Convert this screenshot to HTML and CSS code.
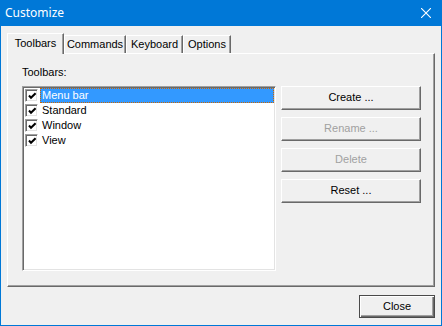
FILE: index.html
```html
<!DOCTYPE html>
<html>
<head>
<meta charset="utf-8">
<link rel="stylesheet" href="styles.css">
</head>
<body>
<div class="window">
  <div class="titlebar">
    <span class="title">Customize</span>
    <svg class="close-x" width="10" height="10" viewBox="0 0 10 10"><path d="M0 0L10 10M10 0L0 10" stroke="#fff" stroke-width="1.1" fill="none"/></svg>
  </div>
  <div class="body">
    <div class="tabs">
      <div class="tab selected tab-toolbars">Toolbars</div>
      <div class="tab tab-commands">Commands</div>
      <div class="tab tab-keyboard">Keyboard</div>
      <div class="tab tab-options">Options</div>
    </div>
    <div class="pane">
      <div class="label">Toolbars:</div>
      <div class="pane-row">
        <div class="listbox">
          <div class="item">
            <span class="cb"><svg width="9" height="9" viewBox="0 0 9 9"><path d="M1 3.5L3 5.8L7.6 1.2" stroke="#000" stroke-width="2" fill="none"/></svg></span>
            <span class="item-text selected">Menu bar</span>
          </div>
          <div class="item">
            <span class="cb"><svg width="9" height="9" viewBox="0 0 9 9"><path d="M1 3.5L3 5.8L7.6 1.2" stroke="#000" stroke-width="2" fill="none"/></svg></span>
            <span class="item-text">Standard</span>
          </div>
          <div class="item">
            <span class="cb"><svg width="9" height="9" viewBox="0 0 9 9"><path d="M1 3.5L3 5.8L7.6 1.2" stroke="#000" stroke-width="2" fill="none"/></svg></span>
            <span class="item-text">Window</span>
          </div>
          <div class="item">
            <span class="cb"><svg width="9" height="9" viewBox="0 0 9 9"><path d="M1 3.5L3 5.8L7.6 1.2" stroke="#000" stroke-width="2" fill="none"/></svg></span>
            <span class="item-text">View</span>
          </div>
        </div>
        <div class="buttons">
          <div class="btn">Create ...</div>
          <div class="btn disabled">Rename ...</div>
          <div class="btn disabled">Delete</div>
          <div class="btn">Reset ...</div>
        </div>
      </div>
    </div>
    <div class="footer">
      <div class="btn default">Close</div>
    </div>
  </div>
</div>
</body>
</html>
```
FILE: styles.css
```css
* { box-sizing: border-box; }
html, body { margin: 0; padding: 0; }
body {
  width: 442px;
  height: 326px;
  background: #f0f0f0;
  font-family: "Liberation Sans", Arial, sans-serif;
  font-size: 11px;
  color: #000;
  overflow: hidden;
}
.window {
  width: 442px;
  height: 326px;
  border: 1px solid #0078d7;
  border-top: 0;
  display: flex;
  flex-direction: column;
}
.titlebar {
  height: 26px;
  flex: none;
  background: #0078d7;
  display: flex;
  align-items: center;
  padding: 0 10px 0 4px;
}
.title {
  font-family: "Noto Sans", sans-serif;
  font-size: 12px;
  color: #fff;
  flex: 1;
  line-height: 16px;
}
.close-x { display: block; }
.body {
  flex: 1;
  padding: 7px 6px 7px 6px;
  display: flex;
  flex-direction: column;
}
.tabs {
  height: 20px;
  display: flex;
  align-items: flex-end;
  flex: none;
}
.tab {
  height: 18px;
  line-height: 16px;
  text-align: center;
  border-top: 1px solid #fff;
  border-left: 1px solid #fff;
  border-right: 1px solid #696969;
  box-shadow: inset -1px 0 0 #a0a0a0;
  background: #f0f0f0;
  white-space: nowrap;
}
.tab.selected {
  height: 21px;
  line-height: 19px;
  margin-bottom: -1px;
  position: relative;
  z-index: 1;
}
.tab-toolbars { width: 57px; }
.tab-commands { width: 62px; }
.tab-keyboard { width: 57px; }
.tab-options { width: 48px; }
.pane {
  width: 428px;
  height: 234px;
  flex: none;
  border-top: 1px solid #fff;
  border-left: 1px solid #fff;
  border-right: 1px solid #696969;
  border-bottom: 1px solid #696969;
  box-shadow: inset -1px -1px 0 #a0a0a0;
  padding: 12px 0 0 14px;
}
.label {
  line-height: 13px;
  height: 13px;
  margin-bottom: 7px;
}
.pane-row {
  display: flex;
  gap: 5px;
}
.listbox {
  width: 254px;
  height: 185px;
  background: #fff;
  border-top: 1px solid #a0a0a0;
  border-left: 1px solid #a0a0a0;
  border-right: 1px solid #fff;
  border-bottom: 1px solid #fff;
  box-shadow: inset 1px 1px 0 #696969, inset -1px -1px 0 #e3e3e3;
  padding: 1px;
}
.item {
  height: 15px;
  display: flex;
  align-items: center;
}
.cb {
  width: 13px;
  height: 13px;
  margin-left: 1px;
  margin-right: 2px;
  flex: none;
  background: #fff;
  border-top: 1px solid #a0a0a0;
  border-left: 1px solid #a0a0a0;
  border-right: 1px solid #fff;
  border-bottom: 1px solid #fff;
  box-shadow: inset 1px 1px 0 #696969, inset -1px -1px 0 #e3e3e3;
  display: flex;
  align-items: center;
  justify-content: center;
  padding: 1px 0 0 1px;
}
.cb svg { display: block; }
.item-text {
  flex: 1;
  height: 15px;
  line-height: 13px;
  padding: 0 1px;
  border: 1px solid transparent;
}
.item-text.selected {
  background: #3399ff;
  color: #fff;
  border: 1px dotted #cc6600;
}
.buttons {
  display: flex;
  flex-direction: column;
  gap: 7px;
}
.btn {
  width: 140px;
  height: 24px;
  line-height: 21px;
  text-align: center;
  background: #f0f0f0;
  border-top: 1px solid #fff;
  border-left: 1px solid #fff;
  border-right: 1px solid #696969;
  border-bottom: 1px solid #696969;
  box-shadow: inset -1px -1px 0 #a0a0a0;
}
.btn.disabled { color: #a0a0a0; }
.footer {
  display: flex;
  justify-content: flex-end;
  padding-top: 8px;
}
.btn.default {
  width: 76px;
  height: 23px;
  line-height: 21px;
  border: 1px solid #4a4a4a;
  box-shadow: inset 1px 1px 0 #fff, inset -1px -1px 0 #696969, inset -2px -2px 0 #a0a0a0;
}
```
